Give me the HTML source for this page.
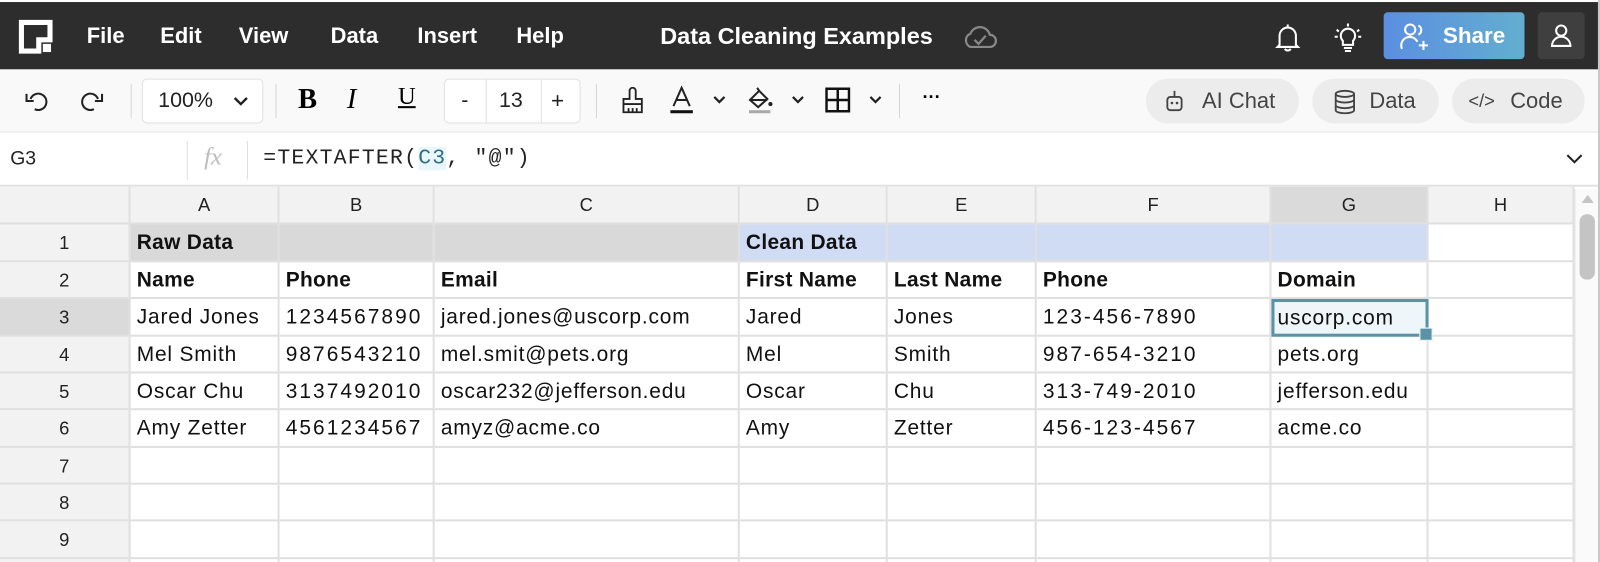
<!DOCTYPE html>
<html><head><meta charset="utf-8">
<style>
*{box-sizing:border-box;margin:0;padding:0}
html,body{width:1600px;height:562px;overflow:hidden;background:#fff}
#clip{position:absolute;left:0;top:0;width:1600px;height:562px;overflow:hidden}
#w{position:absolute;left:0;top:0;width:1568px;height:551px;overflow:hidden;transform:scale(1.0204);transform-origin:0 0;font-family:"Liberation Sans",sans-serif}
.top{position:absolute;left:0;top:2px;width:1566px;height:66px;background:#2d2d2d;color:#fff}
.top .m{position:absolute;top:21px;font-size:21.5px;font-weight:bold}
.tb{position:absolute;left:0;top:68px;width:1566px;height:62px;background:#f9f9f9;border-bottom:1px solid #e2e2e2}
.fb{position:absolute;left:0;top:130px;width:1566px;height:53px;background:#fff;border-bottom:2px solid #e2e2e2}
.ic{position:absolute}
.pill{position:absolute;top:9px;height:44px;border-radius:22px;background:#ececec;color:#444;font-size:21.5px;line-height:44px}
.sep{position:absolute;top:14px;width:1px;height:34px;background:#d6d6d6}
.cell{position:absolute;border-right:2px solid #e0e0e0;border-bottom:2px solid #e0e0e0;font-size:20.5px;letter-spacing:0.8px;color:#111;padding-left:6px;line-height:36px;white-space:nowrap;overflow:hidden}
.hd{background:#f2f2f2;text-align:center;padding:0;color:#222;font-size:18px;letter-spacing:0}
.b{font-weight:bold;letter-spacing:0.3px}
.ph{letter-spacing:2px}
</style></head><body><div id="clip"><div id="w">
<div style="position:absolute;left:1566px;top:0;width:2px;height:560px;background:#c8c8c8"></div>
<div class="top">
 <svg class="ic" style="left:18px;top:17px" width="34" height="34" viewBox="0 0 34 34"><path d="M3 3H31V20H20V31H3Z" fill="none" stroke="#fff" stroke-width="5"/><rect x="24" y="24" width="8" height="8" fill="#fff"/></svg>
 <span class="m" style="left:85px">File</span><span class="m" style="left:157px">Edit</span><span class="m" style="left:234px">View</span><span class="m" style="left:324px">Data</span><span class="m" style="left:409px">Insert</span><span class="m" style="left:506px">Help</span>
 <span class="m" style="left:647px;font-size:23px;top:20px">Data Cleaning Examples</span>
 <svg class="ic" style="left:942px;top:20px" width="36" height="28" viewBox="0 0 36 28"><path d="M9 24H28A6 6 0 0 0 28 12A10 10 0 0 0 9 11A7 7 0 0 0 9 24Z" fill="none" stroke="#888" stroke-width="2.2"/><path d="M13 17L17 21L24 13" fill="none" stroke="#888" stroke-width="2.2"/></svg>
 <svg class="ic" style="left:1249px;top:20px" width="26" height="30" viewBox="0 0 26 30"><path d="M5 22V13A8 8 0 0 1 21 13V22L23 24H3Z M13 2V5 M10 26Q13 29 16 26" fill="none" stroke="#fff" stroke-width="2"/></svg>
 <svg class="ic" style="left:1306px;top:19px" width="30" height="32" viewBox="0 0 30 32"><path d="M10 19A7 7 0 1 1 20 19V23H10Z M11 26H19 M12 29H18 M15 2V5 M4 8L6 10 M26 8L24 10 M2 15H5 M28 15H25" fill="none" stroke="#fff" stroke-width="2"/></svg>
 <div style="position:absolute;left:1356px;top:10px;width:138px;height:46px;border-radius:4px;background:linear-gradient(90deg,#5b8fe0,#63aed0)">
  <svg class="ic" style="left:16px;top:10px" width="30" height="28" viewBox="0 0 30 28"><circle cx="10" cy="7" r="5" fill="none" stroke="#fff" stroke-width="2"/><path d="M2 26A8 8 0 0 1 17 19 M18 3A5 5 0 0 1 18 12 M23 18V27 M18.5 22.5H27.5" fill="none" stroke="#fff" stroke-width="2"/></svg>
  <span style="position:absolute;left:58px;top:10px;font-size:22px;font-weight:bold">Share</span>
 </div>
 <div style="position:absolute;left:1507px;top:10px;width:46px;height:46px;border-radius:4px;background:#3f3f3f">
  <svg class="ic" style="left:12px;top:11px" width="22" height="24" viewBox="0 0 22 24"><circle cx="11" cy="7" r="5" fill="none" stroke="#fff" stroke-width="2"/><path d="M2 22A9 9 0 0 1 20 22Z" fill="none" stroke="#fff" stroke-width="2"/></svg>
 </div>
</div>
<div class="tb">
 <svg class="ic" style="left:24px;top:20px" width="24" height="22" viewBox="0 0 24 22"><path d="M6 9A8 8 0 1 1 10 19" fill="none" stroke="#222" stroke-width="2"/><path d="M2 4V11H9" fill="none" stroke="#222" stroke-width="2"/></svg>
 <svg class="ic" style="left:78px;top:20px" width="24" height="22" viewBox="0 0 24 22"><path d="M18 9A8 8 0 1 0 14 19" fill="none" stroke="#222" stroke-width="2"/><path d="M22 4V11H15" fill="none" stroke="#222" stroke-width="2"/></svg>
 <div class="sep" style="left:128px"></div>
 <div style="position:absolute;left:139px;top:9px;width:119px;height:44px;border:1px solid #e0e0e0;border-radius:5px;background:#fff;font-size:21px;line-height:42px;padding-left:15px;color:#222">100%<svg style="position:absolute;left:88px;top:16px" width="16" height="10" viewBox="0 0 16 10"><path d="M2 2L8 8L14 2" fill="none" stroke="#222" stroke-width="2.4"/></svg></div>
 <div class="sep" style="left:270px"></div>
 <span style="position:absolute;left:292px;top:14px;font-size:28px;font-weight:bold;font-family:'Liberation Serif',serif">B</span>
 <span style="position:absolute;left:340px;top:14px;font-size:28px;font-style:italic;font-family:'Liberation Serif',serif">I</span>
 <span style="position:absolute;left:390px;top:14px;font-size:24px;text-decoration:underline;font-family:'Liberation Serif',serif">U</span>
 <div style="position:absolute;left:435px;top:9px;width:134px;height:44px;border:1px solid #e0e0e0;border-radius:5px;background:#fff;font-size:21px;line-height:42px;color:#222">
  <span style="position:absolute;left:16px">-</span><div style="position:absolute;left:40px;top:0;width:1px;height:42px;background:#e0e0e0"></div><span style="position:absolute;left:53px">13</span><div style="position:absolute;left:94px;top:0;width:1px;height:42px;background:#e0e0e0"></div><span style="position:absolute;left:104px;font-size:22px">+</span>
 </div>
 <div class="sep" style="left:584px"></div>
 <svg class="ic" style="left:607px;top:17px" width="26" height="28" viewBox="0 0 26 28"><path d="M10 12V4A3 3 0 0 1 16 4V12H22V17H4V12Z M4 17V25H22V17 M9 25V21 M13 25V21 M17 25V21" fill="none" stroke="#222" stroke-width="1.8"/></svg>
 <svg class="ic" style="left:655px;top:16px" width="28" height="30" viewBox="0 0 28 30"><path d="M5 20L13 2L21 20 M8 14H18" fill="none" stroke="#222" stroke-width="2"/><rect x="2" y="24" width="22" height="3" fill="#111"/></svg>
 <svg class="ic" style="left:698px;top:25px" width="14" height="10" viewBox="0 0 14 10"><path d="M2 2L7 7L12 2" fill="none" stroke="#222" stroke-width="2.2"/></svg>
 <svg class="ic" style="left:732px;top:16px" width="28" height="30" viewBox="0 0 28 30"><path d="M3 14L12 5L20 13L11 21Z M12 5L10 2 M4 14H20" fill="none" stroke="#222" stroke-width="2"/><circle cx="23" cy="18" r="2" fill="#222"/><rect x="2" y="24" width="21" height="3" fill="#aaa"/></svg>
 <svg class="ic" style="left:775px;top:25px" width="14" height="10" viewBox="0 0 14 10"><path d="M2 2L7 7L12 2" fill="none" stroke="#222" stroke-width="2.2"/></svg>
 <svg class="ic" style="left:808px;top:17px" width="26" height="26" viewBox="0 0 26 26"><path d="M2 2H24V24H2Z M13 2V24 M2 13H24" fill="none" stroke="#111" stroke-width="2.4"/></svg>
 <svg class="ic" style="left:851px;top:25px" width="14" height="10" viewBox="0 0 14 10"><path d="M2 2L7 7L12 2" fill="none" stroke="#222" stroke-width="2.2"/></svg>
 <div class="sep" style="left:881px"></div>
 <span style="position:absolute;left:904px;top:17px;font-size:18px;font-weight:bold">···</span>
 <div class="pill" style="left:1123px;width:150px"><svg class="ic" style="left:18px;top:10px" width="20" height="24" viewBox="0 0 20 24"><rect x="3" y="8" width="14" height="13" rx="3" fill="none" stroke="#444" stroke-width="1.8"/><path d="M10 8V2" stroke="#444" stroke-width="1.8"/><circle cx="7.5" cy="14" r="1.3" fill="#444"/><circle cx="12.5" cy="14" r="1.3" fill="#444"/></svg><span style="position:absolute;left:55px">AI Chat</span></div>
 <div class="pill" style="left:1286px;width:124px"><svg class="ic" style="left:20px;top:10px" width="24" height="26" viewBox="0 0 24 26"><ellipse cx="12" cy="5" rx="9" ry="3" fill="none" stroke="#444" stroke-width="1.8"/><path d="M3 5V21A9 3 0 0 0 21 21V5 M3 10.5A9 3 0 0 0 21 10.5 M3 16A9 3 0 0 0 21 16" fill="none" stroke="#444" stroke-width="1.8"/></svg><span style="position:absolute;left:56px">Data</span></div>
 <div class="pill" style="left:1423px;width:130px"><span style="position:absolute;left:16px;font-size:18px">&lt;/&gt;</span><span style="position:absolute;left:57px">Code</span></div>
</div>
<div class="fb">
 <span style="position:absolute;left:10px;top:15px;font-size:19px;color:#222">G3</span>
 <div style="position:absolute;left:183px;top:8px;width:1px;height:38px;background:#ddd"></div>
 <span style="position:absolute;left:200px;top:11px;font-size:24px;color:#bbb;font-style:italic;font-family:'Liberation Serif',serif">fx</span>
 <div style="position:absolute;left:242px;top:8px;width:1px;height:38px;background:#ddd"></div>
 <span style="position:absolute;left:258px;top:14px;font-size:21px;font-family:'Liberation Mono',monospace;color:#222;letter-spacing:1.2px">=TEXTAFTER(<span style="color:#2d6f85;background:#e9f6fb">C3</span>, "@")</span>
 <svg class="ic" style="left:1534px;top:20px" width="18" height="12" viewBox="0 0 18 12"><path d="M2 2L9 9L16 2" fill="none" stroke="#222" stroke-width="2"/></svg>
</div>
<div id="g"></div>
<div style="position:absolute;left:1543px;top:185px;width:23px;height:377px;background:#fafafa;border-left:1px solid #e6e6e6"></div>
<svg class="ic" style="left:1548px;top:189px" width="16" height="12" viewBox="0 0 16 12"><path d="M2 10L8 2L14 10Z" fill="#c4c4c4"/></svg>
<div style="position:absolute;left:1548px;top:210px;width:15px;height:64px;border-radius:7px;background:#c4c4c4"></div>
</div></div>
<script>
var xs=[0,128,274,426,725,870,1016,1246,1400,1543];
var ys=[183,220,257,293,330,366,402,439,475,511,548,585];
var h='';
function c(col,row,txt,cls,bg){var x=xs[col],y=ys[row],w=xs[col+1]-x,hh=ys[row+1]-y;
h+='<div class="cell '+(cls||'')+'" style="left:'+x+'px;top:'+y+'px;width:'+w+'px;height:'+hh+'px;'+(bg?'background:'+bg+';':'')+'">'+(txt||'')+'</div>';}
var L=['','A','B','C','D','E','F','G','H'];
for(var i=0;i<9;i++)c(i,0,L[i],'hd',i==7?'#dadada':'');
var data=[
['Raw Data','','','Clean Data','','',''],
['Name','Phone','Email','First Name','Last Name','Phone','Domain'],
['Jared Jones','1234567890','jared.jones@uscorp.com','Jared','Jones','123-456-7890','uscorp.com'],
['Mel Smith','9876543210','mel.smit@pets.org','Mel','Smith','987-654-3210','pets.org'],
['Oscar Chu','3137492010','oscar232@jefferson.edu','Oscar','Chu','313-749-2010','jefferson.edu'],
['Amy Zetter','4561234567','amyz@acme.co','Amy','Zetter','456-123-4567','acme.co']];
for(var r=1;r<=10;r++){
 c(0,r,String(r),'hd',r==3?'#dadada':'');
 for(var k=1;k<=8;k++){
  var t='',cls='',bg='';
  if(r<=6&&k<=7)t=data[r-1][k-1];
  if(r<=2)cls='b';
  if(r>=3&&(k==2||k==6))cls='ph';
  if(r==1)bg=k<=3?'#d9d9d9':(k<=7?'#d0dcf3':'');
  c(k,r,t,cls,bg);
 }
}
h+='<div style="position:absolute;left:1246px;top:293px;width:154px;height:37px;border:3px solid #5b93a6;background:#eef6f9;font-size:20.5px;letter-spacing:0.8px;line-height:31px;padding-left:3px;color:#111">uscorp.com</div>';
h+='<div style="position:absolute;left:1391px;top:321px;width:13px;height:13px;background:#5b93a6;border:1px solid #fff"></div>';
document.getElementById('g').innerHTML=h;
</script>
</body></html>
